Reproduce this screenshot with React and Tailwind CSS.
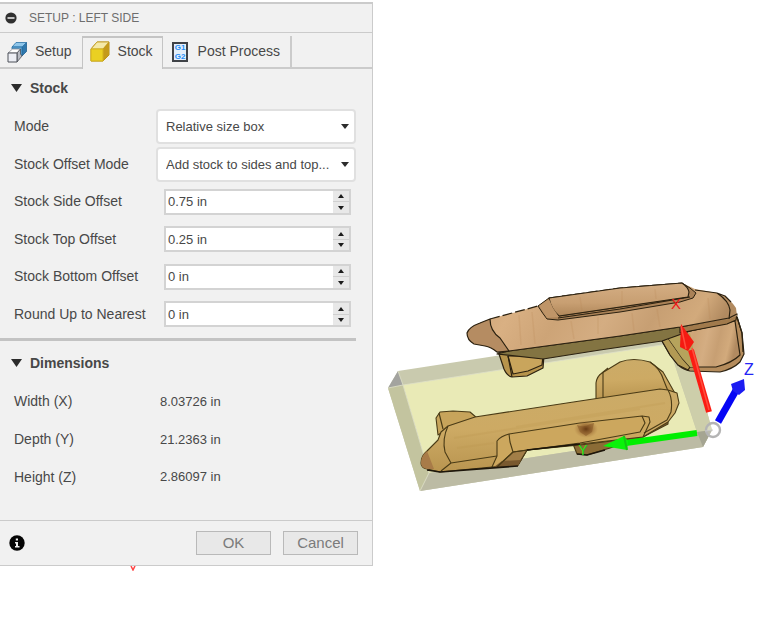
import { useState } from 'react'

const tabs = [
  { name: 'Setup', icon: SetupIcon },
  { name: 'Stock', icon: StockIcon },
  { name: 'Post Process', icon: PostIcon },
]

const selects = [
  { id: 'mode', label: 'Mode', options: ['Relative size box'] },
  { id: 'offset-mode', label: 'Stock Offset Mode', options: ['Add stock to sides and top...'] },
]

const offsets = [
  { id: 'side', label: 'Stock Side Offset', value: 0.75 },
  { id: 'top', label: 'Stock Top Offset', value: 0.25 },
  { id: 'bottom', label: 'Stock Bottom Offset', value: 0 },
  { id: 'round', label: 'Round Up to Nearest', value: 0 },
]

const dimensions = [
  { label: 'Width (X)', value: '8.03726 in' },
  { label: 'Depth (Y)', value: '21.2363 in' },
  { label: 'Height (Z)', value: '2.86097 in' },
]

function SetupIcon() {
  return (
    <svg viewBox="0 0 20 22" className="w-5 h-[22px]" aria-hidden="true">
      <path d="M15 6 L19.5 1.5 V10.5 L15 15 Z" fill="#2f78ae" stroke="#215f90" strokeWidth="0.8" />
      <path d="M5 6 L9 1.5 H19.5 L15 6 Z" fill="#8fc6ea" stroke="#2a71a6" strokeWidth="0.8" />
      <path d="M5 6 H15 V14 H12 V8 H5 Z" fill="#5ea5d6" stroke="#2a71a6" strokeWidth="0.8" />
      <path d="M1 12 L5.5 8 H13.5 L10 12 Z" fill="#ffffff" stroke="#8b8e96" strokeWidth="0.8" />
      <path d="M10 12 L13.5 8 V13 L15 15 L10 21 Z" fill="#b9bcc4" stroke="#4d5058" strokeWidth="0.8" />
      <path d="M1 12 H10 V21 H1 Z" fill="#eceef4" stroke="#4d5058" />
    </svg>
  )
}

function StockIcon() {
  return (
    <svg viewBox="0 0 20 22" className="w-5 h-[22px]" aria-hidden="true">
      <path d="M1 8 L7 1 H19 V14 L13 20 H1 Z" fill="#b08d12" stroke="#b5901a" />
      <path d="M1 8 L7 1 H19 L13 8 Z" fill="#f4e9a8" stroke="#c9a634" />
      <path d="M13 8 L19 1 V14 L13 20 Z" fill="#c49a1b" />
      <path d="M1 8 H13 V20 H1 Z" fill="#ead022" stroke="#d3b11d" />
    </svg>
  )
}

function PostIcon() {
  return (
    <svg viewBox="0 0 20 20" className="w-5 h-5" aria-hidden="true">
      <rect x="3" y="1" width="14" height="18" fill="#e3effa" stroke="#3f4247" strokeWidth="2" />
      <g fill="#1f8cf5" fontFamily="Liberation Sans, sans-serif" fontSize="8" fontWeight="700" textAnchor="middle">
        <text x="10" y="8">G1</text>
        <text x="10" y="17">G2</text>
      </g>
    </svg>
  )
}

function SectionTitle({ children }) {
  return (
    <h2>
      <button className="flex items-center gap-2 pl-[11px] h-6 text-[14px] font-bold">
        <svg viewBox="0 0 11 8" className="w-[11px] h-2" aria-hidden="true">
          <path d="M0 0 H11 L5.5 8 Z" fill="#2c2c2c" />
        </svg>
        {children}
      </button>
    </h2>
  )
}

function SelectRow({ id, label, options }) {
  return (
    <div className="flex items-center">
      <label htmlFor={id} className="w-[142px] shrink-0">{label}</label>
      <div className="relative flex-1 min-w-0 mr-4">
        <select
          id={id}
          className="block appearance-none w-full h-[35px] pl-2 pr-4 bg-white border-2 border-[#e0e0e0] rounded-sm text-[13px]"
        >
          {options.map(o => <option key={o}>{o}</option>)}
        </select>
        <svg viewBox="0 0 8 5" className="absolute right-[7px] top-[15px] w-2 h-[5px] pointer-events-none" aria-hidden="true">
          <path d="M0 0 H8 L4 5 Z" fill="#2c2c2c" />
        </svg>
      </div>
    </div>
  )
}

function OffsetRow({ id, label, value }) {
  const [amount, setAmount] = useState(value)

  return (
    <div className="flex items-center">
      <label htmlFor={id} className="w-[150px] shrink-0">{label}</label>
      <div className="flex flex-1 min-w-0 h-[26px] mr-[21px] border-2 border-[#d3d3d3] bg-white">
        <input
          id={id}
          value={`${amount} in`}
          onChange={e => setAmount(parseFloat(e.target.value) || 0)}
          className="flex-1 min-w-0 pl-0.5 text-[13px] outline-none"
        />
        <div className="flex flex-col w-4 bg-[#e8e8e8] divide-y divide-[#d0d0d0]">
          <button aria-label="Increase" onClick={() => setAmount(amount + 0.25)} className="flex flex-1 items-center justify-center">
            <svg viewBox="0 0 6 4" className="w-1.5 h-1"><path d="M0 4 H6 L3 0 Z" fill="#1c1c1c" /></svg>
          </button>
          <button aria-label="Decrease" onClick={() => setAmount(amount - 0.25)} className="flex flex-1 items-center justify-center">
            <svg viewBox="0 0 6 4" className="w-1.5 h-1"><path d="M0 0 H6 L3 4 Z" fill="#1c1c1c" /></svg>
          </button>
        </div>
      </div>
    </div>
  )
}

function SetupPanel() {
  const [active, setActive] = useState('Stock')

  return (
    <section className="bg-[#f1f1f1] border-t-2 border-r border-b border-[#cbcbcb] text-[14px] text-[#484848]">
      <header className="flex items-center gap-3 h-[29px] pl-[5px] border-b border-[#cbcbcb]">
        <svg viewBox="0 0 12 12" className="w-3 h-3" aria-hidden="true">
          <circle cx="6" cy="6" r="5.6" fill="#303030" />
          <path d="M2.5 6 H9.5" stroke="#e8e8e8" strokeWidth="1.6" />
        </svg>
        <h1 className="text-[12px] text-[#6e6e6e]">SETUP : LEFT SIDE</h1>
      </header>

      <nav className="flex h-9 pt-[3px] shadow-[inset_0_-2px_0_#cbcbcb]">
        {tabs.map(({ name, icon: Icon }) => (
          <button
            key={name}
            onClick={() => setActive(name)}
            className={
              active === name
                ? 'flex items-center gap-2 pl-[7px] pr-[9px] pb-1 bg-[#f1f1f1] border-t-2 border-x border-[#c4c4c4]'
                : 'flex items-center gap-2 pl-[7px] pr-[10px] mb-[2px] last:border-r-2 border-[#cbcbcb]'
            }
          >
            <Icon />
            {name}
          </button>
        ))}
      </nav>

      <div className="pt-[7px]">
        <SectionTitle>Stock</SectionTitle>
        <div className="grid grid-cols-1 grid-rows-6 h-[225px] mt-2 pl-[14px]">
          {selects.map(s => <SelectRow key={s.id} {...s} />)}
          {offsets.map(o => <OffsetRow key={o.id} {...o} />)}
        </div>
      </div>

      <hr className="mt-[5px] mr-4 border-t-3 border-[#c3c3c3]" />

      <div className="pt-[10px] pb-6">
        <SectionTitle>Dimensions</SectionTitle>
        <dl className="grid grid-cols-1 grid-rows-3 h-[113px] mt-2 pl-[14px]">
          {dimensions.map(d => (
            <div key={d.label} className="flex items-center">
              <dt className="w-[146px]">{d.label}</dt>
              <dd className="text-[13px]">{d.value}</dd>
            </div>
          ))}
        </dl>
      </div>

      <footer className="flex items-center gap-3 h-[45px] pl-[9px] pr-[14px] border-t border-[#cbcbcb]">
        <button aria-label="Info" className="mr-auto">
          <svg viewBox="0 0 16 16" className="w-4 h-4">
            <circle cx="8" cy="8" r="7.7" fill="#050505" />
            <path d="M6 7 H9 V11 H10.5 V12.5 H6 V11 H7 V8.5 H6 Z M6.8 3.4 H9 V5.6 H6.8 Z" fill="#f1f1f1" />
          </svg>
        </button>
        <button className="w-[75px] h-6 bg-[#e8e8e8] border border-[#b9b9b9] text-[15px] leading-5 text-[#7b7b7b]">OK</button>
        <button className="w-[75px] h-6 bg-[#e8e8e8] border border-[#b9b9b9] text-[15px] leading-5 text-[#7b7b7b]">Cancel</button>
      </footer>
    </section>
  )
}

function Viewport() {
  return (
    <svg viewBox="373 0 400 623" className="w-full h-auto" role="img" aria-label="Stock preview">
      <defs>
        <linearGradient id="wood" x1="0" y1="0" x2="1" y2="0.15">
          <stop offset="0" stopColor="#b58c62" />
          <stop offset="0.08" stopColor="#cfa577" />
          <stop offset="0.22" stopColor="#d9b083" />
          <stop offset="0.4" stopColor="#cda477" />
          <stop offset="0.58" stopColor="#d4ad82" />
          <stop offset="0.75" stopColor="#c79f73" />
          <stop offset="0.9" stopColor="#d2aa7c" />
          <stop offset="1" stopColor="#b18a60" />
        </linearGradient>
        <linearGradient id="canopy" x1="0" y1="0" x2="0" y2="1">
          <stop offset="0" stopColor="#d4ae84" />
          <stop offset="0.6" stopColor="#c89f72" />
          <stop offset="1" stopColor="#b0875a" />
        </linearGradient>
        <linearGradient id="tinted" x1="0" y1="0" x2="0.1" y2="1">
          <stop offset="0" stopColor="#cbab68" />
          <stop offset="0.5" stopColor="#cdaa64" />
          <stop offset="1" stopColor="#b99550" />
        </linearGradient>
        <radialGradient id="knot">
          <stop offset="0" stopColor="#60330f" stopOpacity="0.9" />
          <stop offset="0.5" stopColor="#8c5a28" stopOpacity="0.6" />
          <stop offset="1" stopColor="#a87840" stopOpacity="0" />
        </radialGradient>
      </defs>

      {/* stock box */}
      <path d="M398 371 L684 327 L712 430 L703 447 L420 491 L388 388 Z" fill="#c9caae" />
      <path d="M403 385 L668 344 L697 432 L429 473 Z" fill="#e9eab6" />
      <path d="M388 388 L403 385 L429 473 L420 491 Z" fill="#c3c49f" />
      <path d="M398 371 L403 385 L388 388 Z" fill="#a3a39f" />
      <path d="M429 473 L697 432 L712 430 L703 447 L420 491 Z" fill="#bcbba4" />
      <path d="M668 344 L684 327 L712 430 L697 432 Z" fill="#cdceaa" />
      <path d="M697 432 L712 430 L703 447 Z" fill="#a5a592" />
      <path d="M398 371 L403 385 L388 388 M403 385 L429 473 L420 491 M403 385 L668 344" fill="none" stroke="#dedfc8" strokeWidth="0.8" />

      {/* upper body */}
      <g stroke="#2b2110" strokeWidth="1.2" strokeLinejoin="round">
        <path d="M662 341 L670 355 L678 365 Q684 370 690 371 L720 372 Q733 369 740 362 L744 354 L742 333 L737 317 L690 328 Z" fill="#b58c5c" />
        <path d="M668 338 L682 358 L690 367 H716 Q732 363 740 355 L735 321 L690 331 Z" fill="url(#wood)" />
        <path d="M662 341 L670 355 L678 365 L688 370 L690 367 L682 358 L668 338 Z" fill="#b39a54" />
        <path d="M668 338 L690 333 L697 367 L690 367 L682 358 Z" fill="#b6a35c" stroke="none" />
        <path d="M499 354 L504 369 Q507 376 512 377 L527 376 L543 368 L544 355 Z" fill="#b7944c" />
        <path d="M508 356 L513 374 L528 371 L542 365 L543 356 Z" fill="#c9a55c" />
        <path d="M508 356 L512 377" fill="none" />
        <path d="M509 351 L620 336 L680 327 L729 318 L728 323 L690 331 L662 341 L600 350 L543 359 L497 354 Z" fill="#837442" />
        <path d="M680 327 L729 318 L737 314 L736 320 L727 324 L690 331 L680 333 Z" fill="#a17a4c" />
        <path d="M467 333 Q469 327 480 323 L490 319 L538 306 L549 298 L620 288 L682 283 L695 289 L717 293 L725 296 Q733 303 736 308 L737 316 L729 319 L680 327 L620 336 L509 351 L497 352 Q491 347 485 346 L474 344 Q467 340 467 333 Z" fill="url(#wood)" stroke="none" />
        <path d="M467 333 Q469 327 480 323 L490 319 Q490 331 500 338 L509 351 L497 352 Q491 347 485 346 L474 344 Q467 340 467 333 Z" fill="#b58c62" />
        <path d="M490 319 L538 306 M549 298 L620 288 L682 283" fill="none" strokeDasharray="10 3" />
        <path d="M497 353 L509 351 L620 336 L680 327 L729 318 L737 314" fill="none" />
        <path d="M538 306 L549 298 L553 308 L559 316 L620 307 L688 297 L682 283 L690 288 L696 293 L693 298 L680 302 L620 312 L558 320 L547 319 Q543 314 538 306 Z" fill="#aa8257" strokeWidth="1" />
        <path d="M549 298 L620 288 L682 283 Q688 287 689 292 L688 297 L620 307 L559 316 Q551 309 549 298 Z" fill="url(#canopy)" />
        <path d="M539 306 L549 299 L553 308 L559 317 L547 318 Z" fill="#bf9568" stroke="none" />
        <path d="M558 318 L620 309 L690 297 M695 290 L717 293 Q729 301 730 310 L729 319 M717 293 L725 296 L731 302 M737 317 L742 333 L743 352" fill="none" />
      </g>
      <g stroke="#b98653" strokeWidth="1.5" opacity="0.2">
        <path d="M519 315 L521 345 M532 312 L535 344 M571 321 L574 339 M598 317 L598 334 M632 313 L634 331 M657 309 L660 327 M708 298 L710 319 M580 297 L582 311 M622 291 L622 304 M655 289 L656 299" />
      </g>

      {/* lower body */}
      <g stroke="#4a3b16" strokeWidth="1.1" strokeLinejoin="round">
        <path d="M573 444 L577 454 L587 455 L610 448 L643 437 L668 424 L668 416 L590 440 Z" fill="#8b6c36" />
        <path d="M438 435 L436 418 L440 412 L453 411 L470 412 L477 418 L446 430 Z" fill="#c7a45b" />
        <path d="M439 413 L443 429" fill="none" />
        <path d="M596 401 L596 383 Q597 376 602 373 L620 362 Q633 357 650 362 L663 372 L672 388 L677 397 L660 402 Z" fill="url(#tinted)" />
        <path d="M603 399 L603 373 M650 362 Q660 368 664 381 L668 391 M602 373 L608 368" fill="none" />
        <path d="M421 463 Q421 456 427 451 L438 440 L441 432 L448 426 L475 417 L580 401 L660 389 L668 390 L677 393 L679 403 L675 413 L668 422 L643 437 L580 445 L527 450 L518 465 L492 467 L440 472 L427 469 Q421 468 421 463 Z" fill="url(#tinted)" />
        <path d="M421 463 Q421 456 427 451 L434 469 L427 469 Q421 468 421 463 Z" fill="#a87b48" stroke="none" />
        <path d="M448 426 Q442 439 445 452 L451 463 L441 471 M451 463 L497 456" fill="none" />
        <path d="M492 467 L497 456 V441 Q501 436 509 434 L580 423 L642 416 L649 417 L650 422 L643 437 L527 450 L518 465 Z" fill="#cca75e" />
        <path d="M497 467 L513 452 L527 450 L518 465 Z" fill="#a27e47" />
        <path d="M494 467 L502 461 L521 460 L518 466 Z" fill="#79592f" stroke="none" />
        <path d="M509 434 L510 442 L513 452 L580 443 L640 432 L645 423 L642 416 M513 452 L497 467 M668 390 Q673 399 671 412 L667 420 L644 433" fill="none" />
      </g>
      <path d="M427 470 L440 472 L518 466 M527 450 L580 444 M577 454 L587 455 L605 450" fill="none" stroke="#1d160b" strokeWidth="1.6" />
      <path d="M454 438 L640 409 M457 448 L494 443 M516 427 L665 403" stroke="#b9934b" strokeWidth="2" opacity="0.2" />
      <path d="M577 425 Q584 428 590 424 L594 423 L592 432 L586 436 L580 432 Z" fill="#70431a" opacity="0.5" />
      <ellipse cx="586" cy="429" rx="12" ry="9" fill="url(#knot)" />

      {/* axes */}
      <path d="M709 412 L691 350" stroke="#fb1c13" strokeWidth="6" />
      <path d="M681 324 L680 347 L688 351 L694 342 Z" fill="#f51a12" />
      <path d="M681 326 L686 349 M692 348 L709 410" stroke="#ff4d3d" strokeWidth="1.5" />
      <path d="M697 433 L626 443" stroke="#00ee00" strokeWidth="6" />
      <path d="M603 446 L624 436 L628 441 L627 450 Z" fill="#0af30a" />
      <path d="M624 436 L627 450" stroke="#12c712" strokeWidth="2" />
      <path d="M718 422 L739 385" stroke="#0505f5" strokeWidth="7" />
      <path d="M744 379 L731 384 L733 391 L739 395 L745 390 Z" fill="#1c1cf2" />
      <circle cx="713" cy="430" r="7" fill="#ffffff" fillOpacity="0.25" stroke="#b4b4b4" strokeWidth="2.4" />
      <path d="M705 431 L713 430" stroke="#c8c8c8" />
      <g fontFamily="Liberation Sans, sans-serif" textAnchor="middle">
        <text x="676" y="309" fontSize="15" fill="#f01818">X</text>
        <text x="583" y="455" fontSize="14" fill="#19e619">Y</text>
        <text x="749" y="375" fontSize="16" fill="#2424f5">Z</text>
      </g>
    </svg>
  )
}

function App() {
  return (
    <main className="flex items-start min-h-screen bg-white font-['Liberation_Sans',Arial,sans-serif]">
      <div className="w-[373px] shrink-0 pt-[2px]">
        <SetupPanel />
        <svg viewBox="0 0 6 5" className="w-1.5 h-[5px] ml-[130px]" aria-hidden="true">
          <path d="M1 0 L3 4 L5 0" fill="none" stroke="#ff4545" strokeWidth="1.5" />
        </svg>
      </div>
      <div className="flex-1 min-w-0">
        <Viewport />
      </div>
    </main>
  )
}

export default App
